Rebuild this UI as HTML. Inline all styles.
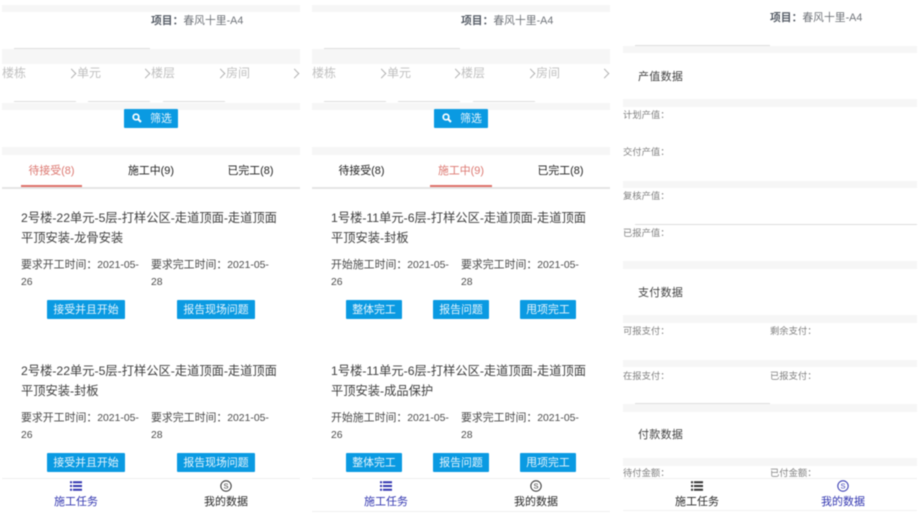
<!DOCTYPE html>
<html lang="zh"><head><meta charset="utf-8">
<style>
html,body{margin:0;padding:0;background:#fff}
body{width:924px;height:526px;position:relative;overflow:hidden;font-family:"Liberation Sans","Noto Sans CJK SC",sans-serif}
#w{position:absolute;left:0;top:0;width:924px;height:526px;filter:blur(.4px)}
.p{position:absolute;top:0;height:526px}
.b{position:absolute;background:#f6f6f6}
.l{position:absolute;background:#dedede;height:1px}
.t{position:absolute;white-space:nowrap;line-height:16px}
.prj{font-size:10.8px;color:#70747a;margin-top:1px}.prj b{color:#555c66;font-weight:700}
.ph{font-size:12px;color:#c0c0c0}
.ch{position:absolute;width:6px;height:6px;border-top:1px solid #b4b4b4;border-right:1px solid #b4b4b4;transform:rotate(45deg)}
.tab{font-size:10.9px;color:#222;width:80px;text-align:center;margin-top:1px}
.red{color:#dc7770}
.ti{font-size:12.25px;color:#404040;margin-top:1px}
.d{font-size:10.9px;color:#4a4a4a;margin-top:1px}
.d span{font-size:10.4px}
.btn{position:absolute;background:#0a9ae2;color:#e6f5fd;font-size:10.9px;line-height:20px;height:19px;text-align:center;border-radius:1px;white-space:nowrap}
.nv{font-size:11px;color:#2a2a2a;width:60px;text-align:center;margin-top:1px}
.blue{color:#3236b0}
.k{font-size:9.3px;color:#808080;margin-top:1px}
.h{font-size:11px;color:#444;letter-spacing:.3px;margin-top:1px}
svg{position:absolute;overflow:visible}
</style></head><body><div id="w">

<div class="p" style="left:2px;width:298px">
<div class="b" style="left:0;top:5px;width:298px;height:7px"></div>
<div class="t prj" style="left:149px;top:12px"><b>项目：</b>春风十里-A4</div>
<div class="l" style="left:12px;top:48px;width:136px"></div>
<div class="b" style="left:0;top:49px;width:298px;height:15px"></div>
<div class="t ph" style="left:0;top:65px">楼栋</div><div class="ch" style="left:66px;top:70px"></div>
<div class="t ph" style="left:75px;top:65px">单元</div><div class="ch" style="left:140px;top:70px"></div>
<div class="t ph" style="left:149px;top:65px">楼层</div><div class="ch" style="left:215px;top:70px"></div>
<div class="t ph" style="left:224px;top:65px">房间</div><div class="ch" style="left:289px;top:70px"></div>
<div class="l" style="left:12px;top:101px;width:62px"></div><div class="l" style="left:86px;top:101px;width:62px"></div><div class="l" style="left:161px;top:101px;width:62px"></div>
<div class="b" style="left:0;top:103px;width:298px;height:7px"></div>
<div class="btn" style="left:122px;top:109px;width:54px"><svg style="left:8px;top:4px" width="10" height="10" viewBox="0 0 10 10"><circle cx="4" cy="4" r="2.8" fill="none" stroke="#fff" stroke-width="1.7"/><path d="M6 6L9 9" stroke="#fff" stroke-width="2"/></svg><span style="margin-left:20px;display:inline-block">筛选</span></div>
<div class="b" style="left:0;top:147px;width:298px;height:8px"></div>
<div class="t tab red" style="left:9.5px;top:162px">待接受(8)</div>
<div class="t tab" style="left:109px;top:162px">施工中(9)</div>
<div class="t tab" style="left:208.5px;top:162px">已完工(8)</div>
<div style="position:absolute;left:0;top:187px;width:298px;height:2px;background:#e4e4e4"></div>
<div style="position:absolute;left:19px;top:185px;width:61px;height:2px;background:#e0726b"></div>
<div class="t ti" style="left:19px;top:209px">2号楼-22单元-5层-打样公区-走道顶面-走道顶面</div>
<div class="t ti" style="left:19px;top:229px">平顶安装-龙骨安装</div>
<div class="t d" style="left:19px;top:256px">要求开工时间：<span>2021-05-</span></div><div class="t d" style="left:19px;top:273px"><span>26</span></div>
<div class="t d" style="left:149px;top:256px">要求完工时间：<span>2021-05-</span></div><div class="t d" style="left:149px;top:273px"><span>28</span></div>
<div class="btn" style="left:45px;top:300px;width:78px">接受并且开始</div>
<div class="btn" style="left:175px;top:300px;width:78px">报告现场问题</div>
<div class="t ti" style="left:19px;top:362px">2号楼-22单元-5层-打样公区-走道顶面-走道顶面</div>
<div class="t ti" style="left:19px;top:382px">平顶安装-封板</div>
<div class="t d" style="left:19px;top:409px">要求开工时间：<span>2021-05-</span></div><div class="t d" style="left:19px;top:426px"><span>26</span></div>
<div class="t d" style="left:149px;top:409px">要求完工时间：<span>2021-05-</span></div><div class="t d" style="left:149px;top:426px"><span>28</span></div>
<div class="btn" style="left:45px;top:453px;width:78px">接受并且开始</div>
<div class="btn" style="left:175px;top:453px;width:78px">报告现场问题</div>
<div class="l" style="left:0;top:478px;width:298px;background:#efefef"></div>
<svg style="left:68px;top:481px" width="12" height="10" viewBox="0 0 12 10"><path d="M0 1.2H2M3 1.2H12M0 5H2M3 5H12M0 8.8H2M3 8.8H12" stroke="#3236b0" stroke-width="2"/></svg>
<svg style="left:218px;top:480px" width="12" height="12" viewBox="0 0 12 12"><circle cx="6" cy="6" r="5.2" fill="none" stroke="#333" stroke-width="1"/><text x="6" y="8.6" font-size="7.5" text-anchor="middle" fill="#333" font-family="Liberation Sans">S</text></svg>
<div class="t nv blue" style="left:44px;top:493px">施工任务</div>
<div class="t nv" style="left:194px;top:493px">我的数据</div>
</div>

<div class="p" style="left:312px;width:298px">
<div class="b" style="left:0;top:5px;width:298px;height:7px"></div>
<div class="t prj" style="left:149px;top:12px"><b>项目：</b>春风十里-A4</div>
<div class="l" style="left:12px;top:48px;width:136px"></div>
<div class="b" style="left:0;top:49px;width:298px;height:15px"></div>
<div class="t ph" style="left:0;top:65px">楼栋</div><div class="ch" style="left:66px;top:70px"></div>
<div class="t ph" style="left:75px;top:65px">单元</div><div class="ch" style="left:140px;top:70px"></div>
<div class="t ph" style="left:149px;top:65px">楼层</div><div class="ch" style="left:215px;top:70px"></div>
<div class="t ph" style="left:224px;top:65px">房间</div><div class="ch" style="left:289px;top:70px"></div>
<div class="l" style="left:12px;top:101px;width:62px"></div><div class="l" style="left:86px;top:101px;width:62px"></div><div class="l" style="left:161px;top:101px;width:62px"></div>
<div class="b" style="left:0;top:103px;width:298px;height:7px"></div>
<div class="btn" style="left:122px;top:109px;width:54px"><svg style="left:8px;top:4px" width="10" height="10" viewBox="0 0 10 10"><circle cx="4" cy="4" r="2.8" fill="none" stroke="#fff" stroke-width="1.7"/><path d="M6 6L9 9" stroke="#fff" stroke-width="2"/></svg><span style="margin-left:20px;display:inline-block">筛选</span></div>
<div class="b" style="left:0;top:147px;width:298px;height:8px"></div>
<div class="t tab" style="left:9.5px;top:162px">待接受(8)</div>
<div class="t tab red" style="left:109px;top:162px">施工中(9)</div>
<div class="t tab" style="left:208.5px;top:162px">已完工(8)</div>
<div style="position:absolute;left:0;top:187px;width:298px;height:2px;background:#e4e4e4"></div>
<div style="position:absolute;left:118px;top:185px;width:62px;height:2px;background:#e0726b"></div>
<div class="t ti" style="left:19px;top:209px">1号楼-11单元-6层-打样公区-走道顶面-走道顶面</div>
<div class="t ti" style="left:19px;top:229px">平顶安装-封板</div>
<div class="t d" style="left:19px;top:256px">开始施工时间：<span>2021-05-</span></div><div class="t d" style="left:19px;top:273px"><span>26</span></div>
<div class="t d" style="left:149px;top:256px">要求完工时间：<span>2021-05-</span></div><div class="t d" style="left:149px;top:273px"><span>28</span></div>
<div class="btn" style="left:34px;top:300px;width:56px">整体完工</div>
<div class="btn" style="left:121px;top:300px;width:56px">报告问题</div>
<div class="btn" style="left:208px;top:300px;width:56px">甩项完工</div>
<div class="t ti" style="left:19px;top:362px">1号楼-11单元-6层-打样公区-走道顶面-走道顶面</div>
<div class="t ti" style="left:19px;top:382px">平顶安装-成品保护</div>
<div class="t d" style="left:19px;top:409px">开始施工时间：<span>2021-05-</span></div><div class="t d" style="left:19px;top:426px"><span>26</span></div>
<div class="t d" style="left:149px;top:409px">要求完工时间：<span>2021-05-</span></div><div class="t d" style="left:149px;top:426px"><span>28</span></div>
<div class="btn" style="left:34px;top:453px;width:56px">整体完工</div>
<div class="btn" style="left:121px;top:453px;width:56px">报告问题</div>
<div class="btn" style="left:208px;top:453px;width:56px">甩项完工</div>
<div class="l" style="left:0;top:478px;width:298px;background:#efefef"></div>
<svg style="left:68px;top:481px" width="12" height="10" viewBox="0 0 12 10"><path d="M0 1.2H2M3 1.2H12M0 5H2M3 5H12M0 8.8H2M3 8.8H12" stroke="#3236b0" stroke-width="2"/></svg>
<svg style="left:218px;top:480px" width="12" height="12" viewBox="0 0 12 12"><circle cx="6" cy="6" r="5.2" fill="none" stroke="#333" stroke-width="1"/><text x="6" y="8.6" font-size="7.5" text-anchor="middle" fill="#333" font-family="Liberation Sans">S</text></svg>
<div class="t nv blue" style="left:44px;top:493px">施工任务</div>
<div class="t nv" style="left:194px;top:493px">我的数据</div>
<div class="l" style="left:0;top:511px;width:298px;background:#f0f0f0"></div>
</div>

<div class="p" style="left:623px;width:294px">
<div class="t prj" style="left:147px;top:9px"><b>项目：</b>春风十里-A4</div>
<div class="l" style="left:12px;top:45px;width:135px"></div>
<div class="b" style="left:0;top:46px;width:294px;height:7px"></div>
<div class="t h" style="left:15px;top:68px">产值数据</div>
<div class="b" style="left:0;top:99px;width:294px;height:8px"></div>
<div class="t k" style="left:0;top:106px">计划产值：</div>
<div class="t k" style="left:0;top:143px">交付产值：</div>
<div class="b" style="left:0;top:181px;width:294px;height:7px"></div>
<div class="t k" style="left:0;top:187px">复核产值：</div>
<div class="l" style="left:12px;top:224px;width:282px"></div>
<div class="t k" style="left:0;top:224px">已报产值：</div>
<div class="b" style="left:0;top:261px;width:294px;height:8px"></div>
<div class="t h" style="left:15px;top:284px">支付数据</div>
<div class="b" style="left:0;top:315px;width:294px;height:8px"></div>
<div class="t k" style="left:0;top:322px">可报支付：</div>
<div class="t k" style="left:147px;top:322px">剩余支付：</div>
<div class="b" style="left:0;top:360px;width:294px;height:7px"></div>
<div class="t k" style="left:0;top:367px">在报支付：</div>
<div class="t k" style="left:147px;top:367px">已报支付：</div>
<div class="l" style="left:12px;top:403px;width:135px"></div>
<div class="b" style="left:0;top:404px;width:294px;height:8px"></div>
<div class="t h" style="left:15px;top:426px">付款数据</div>
<div class="b" style="left:0;top:458px;width:294px;height:8px"></div>
<div class="t k" style="left:0;top:464px">待付金额：</div>
<div class="t k" style="left:147px;top:464px">已付金额：</div>
<div class="l" style="left:0;top:478px;width:294px;background:#f0f0f0"></div>
<svg style="left:68px;top:481px" width="12" height="10" viewBox="0 0 12 10"><path d="M0 1.2H2M3 1.2H12M0 5H2M3 5H12M0 8.8H2M3 8.8H12" stroke="#333" stroke-width="2"/></svg>
<svg style="left:214px;top:480px" width="12" height="12" viewBox="0 0 12 12"><circle cx="6" cy="6" r="5.2" fill="none" stroke="#3236b0" stroke-width="1"/><text x="6" y="8.6" font-size="7.5" text-anchor="middle" fill="#3236b0" font-family="Liberation Sans">S</text></svg>
<div class="t nv" style="left:44px;top:493px">施工任务</div>
<div class="t nv blue" style="left:190px;top:493px">我的数据</div>
<div class="l" style="left:0;top:510px;width:294px;background:#f2f2f2"></div>
</div>

</div></body></html>
